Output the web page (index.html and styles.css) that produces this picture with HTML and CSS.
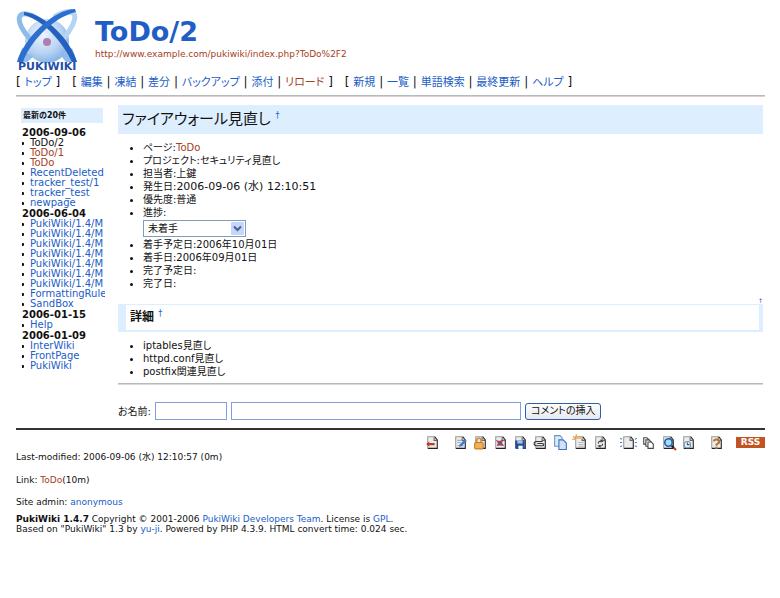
FILE: index.html
```html
<!DOCTYPE html>
<html lang="ja">
<head>
  <meta charset="UTF-8">
  <title>ToDo/2 - PukiWiki</title>
  <link rel="stylesheet" href="styles.css">
</head>
<body>
  <svg class="defs" aria-hidden="true">
    <symbol id="page" viewBox="0 0 16 16">
      <path d="M4 2.5h6l3 3v8H4z" fill="#ececec"/>
      <path d="M3.5 13V2.5H10" fill="none" stroke="#999"/>
      <path d="M10 2.5l2.500 3V13.500H3.500" fill="none" stroke="#222"/>
      <path d="M9.500 3v3h3" fill="none" stroke="#666"/>
    </symbol>
  </svg>

  <header class="header">
    <a class="logo" href="#" aria-label="PukiWiki">
      <svg width="62" height="64" viewBox="0 0 62 64">
        <defs>
          <radialGradient id="ball" cx="40%" cy="35%" r="70%">
            <stop offset="0" stop-color="#edf5fd"/>
            <stop offset="0.6" stop-color="#b9d4f2"/>
            <stop offset="1" stop-color="#7fb0e6"/>
          </radialGradient>
        </defs>
        <circle cx="31" cy="33" r="22" fill="url(#ball)"/>
        <circle cx="31" cy="34" r="4" fill="#b07db0"/>
        <path d="M15 32C7 24 1 13 4 8C7 4 15 6 22 11" fill="none" stroke="#8dbbea" stroke-width="5"/>
        <path d="M47 31C55 22 61 11 58 6C54 2 46 4 38 9" fill="none" stroke="#b5d3f3" stroke-width="5"/>
        <path d="M1 54L6 40L17 49L11 54z" fill="#8fbcec"/>
        <path d="M61 54L56 40L45 48L50 54z" fill="#8fbcec"/>
        <path d="M8 4C29 6 55 32 61 54L56 54C48 37 30 13 8 7z" fill="#2460bf"/>
        <path d="M59 1C37 1 7 32 1 54L7 54C13 36 35 10 60 4z" fill="#2d6fce"/>
        <text x="2" y="62" class="logo-text">PUKIWIKI</text>
      </svg>
    </a>
    <div class="heading">
      <h1 class="title">ToDo/2</h1>
      <a class="visited url" href="#">http://www.example.com/pukiwiki/index.php?ToDo%2F2</a>
    </div>
  </header>

  <nav class="navigator">
    <span>[ <a href="#">トップ</a> ]</span>
    <span>[ <a href="#">編集</a> | <a href="#">凍結</a> | <a href="#">差分</a> | <a href="#">バックアップ</a> | <a href="#">添付</a> | <a class="visited" href="#">リロード</a> ]</span>
    <span>[ <a href="#">新規</a> | <a href="#">一覧</a> | <a href="#">単語検索</a> | <a href="#">最終更新</a> | <a href="#">ヘルプ</a> ]</span>
  </nav>
  <hr class="rule">

  <div class="columns">
    <aside class="menubar">
      <h5>最新の20件</h5>
      <strong>2006-09-06</strong>
      <ul>
        <li>ToDo/2</li>
        <li><a class="visited" href="#">ToDo/1</a></li>
        <li><a class="visited" href="#">ToDo</a></li>
        <li><a href="#">RecentDeleted</a></li>
        <li><a href="#">tracker_test/1</a></li>
        <li><a href="#">tracker_test</a></li>
        <li><a href="#">newpage</a></li>
      </ul>
      <strong>2006-06-04</strong>
      <ul>
        <li><a href="#">PukiWiki/1.4/M</a></li>
        <li><a href="#">PukiWiki/1.4/M</a></li>
        <li><a href="#">PukiWiki/1.4/M</a></li>
        <li><a href="#">PukiWiki/1.4/M</a></li>
        <li><a href="#">PukiWiki/1.4/M</a></li>
        <li><a href="#">PukiWiki/1.4/M</a></li>
        <li><a href="#">PukiWiki/1.4/M</a></li>
        <li><a href="#">FormattingRule</a></li>
        <li><a href="#">SandBox</a></li>
      </ul>
      <strong>2006-01-15</strong>
      <ul>
        <li><a href="#">Help</a></li>
      </ul>
      <strong>2006-01-09</strong>
      <ul>
        <li><a href="#">InterWiki</a></li>
        <li><a href="#">FrontPage</a></li>
        <li><a href="#">PukiWiki</a></li>
      </ul>
    </aside>

    <main class="body">
      <h2>ファイアウォール見直し <a class="anchor" href="#">†</a></h2>
      <ul class="list">
        <li>ページ:<a class="visited" href="#">ToDo</a></li>
        <li>プロジェクト:セキュリティ見直し</li>
        <li>担当者:上鍵</li>
        <li>発生日:<time>2006-09-06 (水) 12:10:51</time></li>
        <li>優先度:普通</li>
        <li><label for="progress">進捗:</label>
          <div class="picker">
            <select id="progress"><option>未着手</option></select>
            <svg class="arrow" width="13" height="13" viewBox="0 0 13 13">
              <rect width="13" height="13" rx="1" fill="#c3d6fb"/>
              <path d="M3 4.500l3.500 3.500L10 4.500" fill="none" stroke="#4d6185" stroke-width="2"/>
            </svg>
          </div>
        </li>
        <li>着手予定日:2006年10月01日</li>
        <li>着手日:2006年09月01日</li>
        <li>完了予定日:</li>
        <li>完了日:</li>
      </ul>
      <div class="jump"><a href="#">↑</a></div>
      <h3>詳細 <a class="anchor" href="#">†</a></h3>
      <ul class="list">
        <li>iptables見直し</li>
        <li>httpd.conf見直し</li>
        <li>postfix関連見直し</li>
      </ul>
      <hr class="rule gray">
      <form class="comment">
        <label for="name">お名前:</label>
        <input type="text" id="name" class="name">
        <input type="text" class="msg" aria-label="コメント">
        <button type="submit">コメントの挿入</button>
      </form>
    </main>
  </div>

  <div class="toolbar">
    <div class="group">
      <a href="#" aria-label="トップ"><svg viewBox="0 0 16 16"><use href="#page"/><path d="M2 9.500l3-2.500v1.500h5v2H5V12z" fill="#c0392b"/></svg></a>
    </div>
    <div class="group">
      <a href="#" aria-label="編集"><svg viewBox="0 0 16 16"><use href="#page"/><path d="M5 6h4M5 8h3M5 11h6" stroke="#aaa"/><path d="M7 10l5-5 2 1.500-5 5-2.500.5z" fill="#3b7dd0"/></svg></a>
      <a href="#" aria-label="凍結"><svg viewBox="0 0 16 16"><use href="#page"/><path d="M4.500 8V6a2 2 0 0 1 4 0v2" fill="none" stroke="#d98a32" stroke-width="1.500"/><rect x="2.500" y="8" width="8" height="6" rx="1" fill="#f0b055" stroke="#c77a24"/></svg></a>
      <a href="#" aria-label="差分"><svg viewBox="0 0 16 16"><use href="#page"/><path d="M3.500 5.500l3 1 4-1-1 3 2 3-4-1-3 1 1-3z" fill="#c23b32"/><path d="M6 7h3l-1 4-2-1z" fill="#4a5fae"/></svg></a>
      <a href="#" aria-label="バックアップ"><svg viewBox="0 0 16 16"><use href="#page"/><path d="M3 6h9v8H4l-1-1z" fill="#254d91"/><path d="M5 6h5v3H5z" fill="#9cc8f2"/><path d="M6 11h4v3H6z" fill="#fff"/></svg></a>
      <a href="#" aria-label="添付"><svg viewBox="0 0 16 16"><use href="#page"/><path d="M10 7H4a2 2 0 0 0 0 4h6a1 1 0 0 0 0-2H5" fill="none" stroke="#333"/></svg></a>
      <a href="#" aria-label="コピー"><svg viewBox="0 0 16 16"><path d="M2.500 1.500h5l2 2v8h-7z" fill="#dcebfa" stroke="#6d93c6"/><path d="M6.500 5.500h4l3 3v6h-7z" fill="#cfe2fa" stroke="#3f72bb"/></svg></a>
      <a href="#" aria-label="新規"><svg viewBox="0 0 16 16"><use href="#page"/><path d="M6 8h5M6 10h5M6 12h5" stroke="#bbb"/><path d="M1 2l2 2M4 0v3M0 5h3" stroke="#f09a2c"/><path d="M4 3.500h6" stroke="#f2b46a" stroke-width="2"/></svg></a>
      <a href="#" aria-label="リロード"><svg viewBox="0 0 16 16"><use href="#page"/><path d="M6 9a2 2 0 0 1 3-2M10 9a2 2 0 0 1-3 2" fill="none" stroke="#444"/><path d="M8 5l3 2-3 1zM8 13l-3-2 3-1z" fill="#444"/></svg></a>
    </div>
    <div class="group">
      <a href="#" aria-label="名前変更"><svg viewBox="0 0 16 16"><use href="#page"/><path d="M0 4l2 1M0 8h2M0 12l2-1M16 4l-2 1M16 8h-2M16 12l-2-1" stroke="#4f83c9"/></svg></a>
      <a href="#" aria-label="一覧"><svg viewBox="0 0 16 16"><g fill="#fff" stroke="#444"><path d="M3.500 3.500h3l2 2v4h-5z"/><path d="M5.500 5.500h3l2 2v4h-5z"/><path d="M7.500 7.500h3l2 2v4h-5z"/></g></svg></a>
      <a href="#" aria-label="検索"><svg viewBox="0 0 16 16"><use href="#page"/><circle cx="8" cy="8" r="3.500" fill="#a9dcf8" stroke="#1f5eae" stroke-width="1.500"/><path d="M11 11l2 2" stroke="#222" stroke-width="2"/><path d="M13 13l2 2" stroke="#c0392b" stroke-width="2"/></svg></a>
      <a href="#" aria-label="最終更新"><svg viewBox="0 0 16 16"><use href="#page"/><circle cx="7" cy="10" r="3" fill="#e5f1fb" stroke="#6f97bb"/><path d="M7 8v2h2" fill="none" stroke="#456"/></svg></a>
    </div>
    <div class="group">
      <a href="#" aria-label="ヘルプ"><svg viewBox="0 0 16 16"><use href="#page"/><path d="M5.500 7a2.500 2 0 1 1 3.500 2l-1 1v1M8 12v2" fill="none" stroke="#b5762f" stroke-width="2"/></svg></a>
    </div>
    <a class="rss" href="#">RSS</a>
  </div>

  <div class="info">Last-modified: 2006-09-06 (水) 12:10:57 (0m)</div>
  <div class="info">Link: <a class="visited" href="#">ToDo</a>(10m)</div>
  <footer class="footer">
    <p>Site admin: <a href="#">anonymous</a></p>
    <p><strong>PukiWiki 1.4.7</strong> Copyright © 2001-2006 <a href="#">PukiWiki Developers Team</a>. License is <a href="#">GPL</a>.<br>
    Based on "PukiWiki" 1.3 by <a href="#">yu-ji</a>. Powered by PHP 4.3.9. HTML convert time: 0.024 sec.</p>
  </footer>
</body>
</html>
```
FILE: styles.css
```css
body {
  margin: 0;
  padding: 8px 15px 8px 16px;
  background: white;
  color: #111;
  font-family: Verdana, "DejaVu Sans", "Noto Sans CJK JP", sans-serif;
  font-feature-settings: "palt";
  font-size: 10px;
  line-height: 13px;
}
a {
  color: #215dc6;
  text-decoration: none;
}
a.visited {
  color: #a63d21;
}
a:hover {
  text-decoration: underline;
}
ul {
  margin: 0;
  padding: 0;
}
.defs {
  display: none;
}

/* header */
.header {
  display: flex;
  gap: 17px;
}
.logo svg {
  display: block;
}
.logo-text {
  font-size: 11px;
  font-weight: bold;
  fill: #1f4fa8;
}
.heading {
  padding-top: 8px;
}
.title {
  margin: 0;
  color: #215dc6;
  font-size: 27px;
  line-height: 32px;
}
.url {
  display: block;
  font-size: 9px;
  line-height: 13px;
}
.navigator {
  display: flex;
  gap: 12px;
  padding-top: 2px;
  font-size: 12px;
  line-height: 17px;
  white-space: nowrap;
}
.navigator a {
  font-size: 11px;
}
.rule {
  height: 1px;
  margin: 4px 0 0;
  border: 0;
  border-top: 1px solid #b4bcbc;
  background: #e3cccf;
}
.rule.gray {
  margin-top: 5px;
  background: #d5dcd8;
}

/* columns */
.columns {
  display: flex;
  gap: 13px;
  padding: 8px 2px 8px 5px;
}
.menubar {
  flex: 0 0 84px;
  overflow: hidden;
  font-size: 10px;
  line-height: 10px;
  white-space: nowrap;
}
.menubar h5 {
  margin: 3px 2px 4px 0;
  padding: 2px;
  background: #ddeeff;
  font-size: 8px;
  line-height: 11px;
}
.menubar strong {
  display: block;
  padding-left: 1px;
  line-height: 11px;
}
.menubar ul {
  padding-left: 1px;
  list-style: none;
}
.menubar li {
  display: flex;
  align-items: center;
  gap: 6px;
}
.menubar li::before {
  content: "";
  flex: none;
  width: 2px;
  height: 3px;
  border-radius: 0 1px 1px 0;
  background: #111;
}
.body {
  flex: 1;
  min-width: 0;
}
.body h2 {
  margin: 0 0 7px;
  padding: 3px 4px;
  background: #ddeeff;
  font-size: 15px;
  font-weight: normal;
  line-height: 23px;
}
.body h3 {
  margin: 0 0 7px;
  padding: 3px 4px;
  border: 1px solid #ddeeff;
  border-width: 1px 4px 2px 8px;
  font-size: 12px;
  line-height: 19px;
}
.anchor {
  font-size: 8px;
  font-weight: normal;
  vertical-align: super;
  line-height: 8px;
}
.list {
  padding-left: 25px;
}
.list li::marker {
  font-size: 11px;
}
.list time {
  font-size: 11px;
}
.jump {
  font-size: 6px;
  line-height: 6px;
  margin-top: 8px;
  text-align: right;
}
.picker {
  position: relative;
  width: 103px;
  margin: 1px 0;
}
.picker select {
  display: block;
  width: 100%;
  height: 17px;
  padding: 0 4px;
  border: 1px solid #7f9db9;
  border-radius: 0;
  appearance: none;
  background: white;
  color: #111;
  font: inherit;
}
.arrow {
  position: absolute;
  top: 2px;
  right: 2px;
  pointer-events: none;
}
.comment {
  display: flex;
  align-items: center;
  gap: 4px;
  padding-top: 17px;
}
.comment label {
  flex: none;
}
.comment input {
  box-sizing: border-box;
  height: 18px;
  padding: 1px 2px;
  border: 1px solid #7f9fdb;
  font: inherit;
}
.comment .name {
  width: 72px;
}
.comment .msg {
  width: 290px;
}
.comment button {
  height: 17px;
  padding: 0 5px;
  border: 1px solid #2c5fae;
  border-radius: 3px;
  background: linear-gradient(#fdfdfd, #e8e8ee);
  color: #111;
  font: inherit;
  line-height: 14px;
}

/* footer */
.toolbar {
  display: flex;
  justify-content: flex-end;
  align-items: center;
  gap: 8px;
  padding-top: 4px;
  border-top: 2px solid #333;
}
.group {
  display: flex;
}
.group a {
  width: 20px;
}
.group svg {
  display: block;
  width: 17px;
  height: 17px;
}
.rss {
  width: 29px;
  background: #c25423;
  color: white;
  font-size: 9px;
  font-weight: bold;
  line-height: 11px;
  text-align: center;
}
.info {
  margin-bottom: 10px;
  font-size: 9px;
}
.footer {
  font-size: 9px;
  line-height: 10px;
}
.footer p {
  margin: 0 0 7px;
}
```
